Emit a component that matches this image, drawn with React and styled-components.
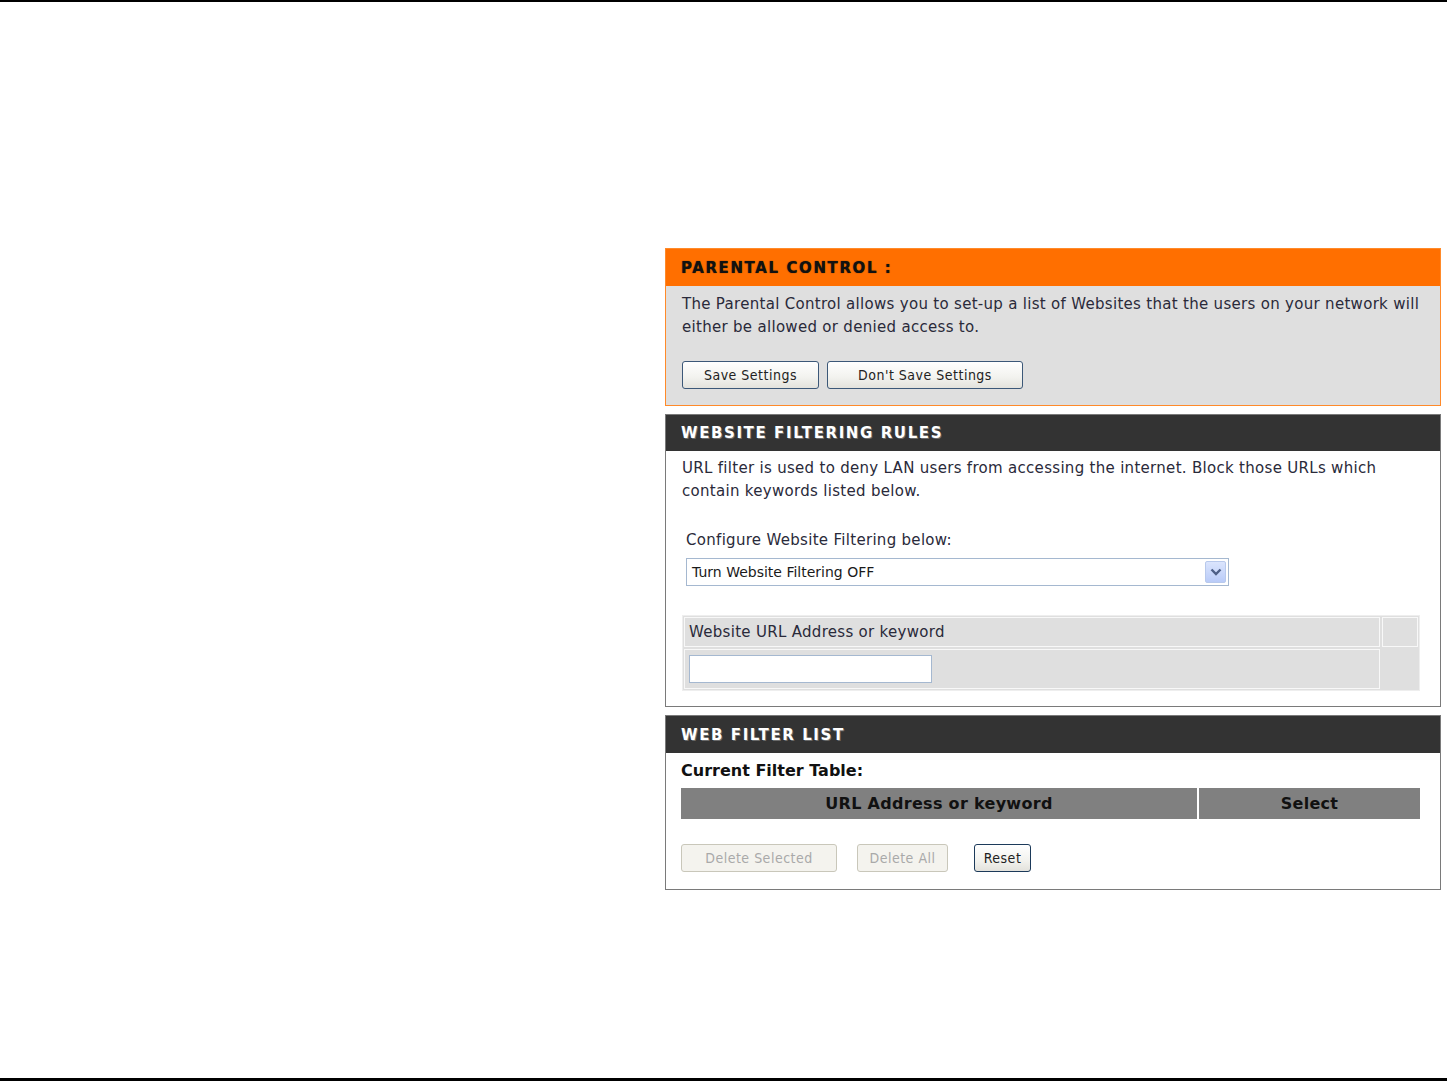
import React from 'react';
import styled, { createGlobalStyle } from 'styled-components';

const GlobalStyle = createGlobalStyle`
    html, body {
        margin: 0;
        padding: 0;
        background: #fff;
    }
    body {
        font-family: "DejaVu Sans", Tahoma, sans-serif;
        color: #222;
    }
`;

const Page = styled.div`
    width: 1447px;
    height: 1081px;
    box-sizing: border-box;
    border-top: 2px solid #000;
    border-bottom: 3px solid #000;
    display: flex;
    flex-direction: column;
    padding: 246px 6px 0 665px;
`;

const Column = styled.div`
    display: flex;
    flex-direction: column;
    gap: 8px;
    width: 776px;
`;

const Panel = styled.div`
    border: 1px solid ${(p) => (p.orange ? '#ff8a2a' : '#7a7a7a')};
    background: ${(p) => (p.orange ? '#dfdfdf' : '#fff')};
`;

const Header = styled.div`
    height: ${(p) => p.h || 36}px;
    background: ${(p) => (p.orange ? '#ff6f00' : '#333333')};
    color: ${(p) => (p.orange ? '#111' : '#fff')};
    display: flex;
    align-items: center;
    padding-left: 15px;
    font-family: "DejaVu Sans", Verdana, sans-serif;
    font-weight: bold;
    font-size: 15px;
    letter-spacing: 1.6px;
    text-shadow: ${(p) => (p.orange ? '0 0 1px #3a2a00' : '1px 1px 0 #6a6a6a')};
`;

const Body = styled.div`
    padding: ${(p) => p.pad || '7px 16px 16px 16px'};
`;

const Text = styled.div`
    font-size: 15px;
    line-height: 23px;
    letter-spacing: 0.3px;
    color: #2a2a3a;
    white-space: nowrap;
`;

const ButtonRow = styled.div`
    display: flex;
    gap: ${(p) => p.gap || 8}px;
    margin-top: ${(p) => p.top || 22}px;
`;

const Button = styled.button`
    height: 28px;
    width: ${(p) => p.w}px;
    margin-left: ${(p) => p.ml || 0}px;
    box-sizing: border-box;
    border-radius: 3px;
    border: 1px solid ${(p) => (p.disabled ? '#c9c7ba' : p.dark ? '#1c3a5a' : '#3c5878')};
    background: ${(p) => (p.disabled ? '#f4f3ee' : 'linear-gradient(#ffffff, #f2f2ee 60%, #e3e2dc)')};
    color: ${(p) => (p.disabled ? '#a9a9a9' : '#222')};
    font-family: "DejaVu Sans Condensed", "DejaVu Sans", Tahoma, sans-serif;
    font-size: 14px;
    letter-spacing: 0.5px;
    padding: 0;
`;

const Label = styled.div`
    font-size: 15px;
    letter-spacing: 0.3px;
    color: #2a2a3a;
    margin: 28px 0 9px 4px;
`;

const SelectBox = styled.div`
    width: 543px;
    height: 28px;
    margin-left: 4px;
    box-sizing: border-box;
    border: 1px solid #a5b8d0;
    background: #fff;
    display: flex;
    align-items: center;
    justify-content: space-between;
    padding: 0 2px 0 5px;
    font-size: 14px;
    color: #1a1a1a;
`;

const ArrowButton = styled.div`
    width: 21px;
    height: 22px;
    box-sizing: border-box;
    border: 1px solid #b8c9ec;
    border-radius: 2px;
    background: linear-gradient(#dbe5fd, #b9cbf8);
    display: flex;
    align-items: center;
    justify-content: center;
`;

const EntryTable = styled.div`
    margin-top: 29px;
    border: 1px solid #eeeeee;
    background: #dfdfdf;
    display: grid;
    grid-template-columns: 1fr 36px;
    grid-template-rows: 30px 40px;
    gap: 2px;
    padding: 1px;
`;

const EntryCell = styled.div`
    border: ${(p) => (p.plain ? 'none' : '1px solid #f8f8f8')};
    background: #dfdfdf;
    display: flex;
    align-items: center;
    padding-left: 4px;
    font-size: 15px;
    letter-spacing: 0.3px;
    color: #2a2a3a;
`;

const TextInput = styled.input`
    width: 243px;
    height: 28px;
    box-sizing: border-box;
    border: 1px solid #a5b8d0;
    background: #fff;
    outline: none;
`;

const SubTitle = styled.div`
    font-weight: bold;
    font-size: 16px;
    color: #111;
    margin-bottom: 8px;
`;

const ListHead = styled.div`
    display: grid;
    grid-template-columns: 516px 1fr;
    gap: 2px;
`;

const HeadCell = styled.div`
    height: 31px;
    background: #808080;
    display: flex;
    align-items: center;
    justify-content: center;
    font-weight: bold;
    font-size: 16px;
    letter-spacing: 0.3px;
    color: #111;
`;

const ChevronDown = () => (
    <svg width="12" height="8" viewBox="0 0 12 8">
        <path d="M1.5 1.5 L6 6 L10.5 1.5" fill="none" stroke="#4d5f86" strokeWidth="2.4" />
    </svg>
);

const App = () => {
    return (
        <Page>
            <GlobalStyle />
            <Column>
                <Panel orange>
                    <Header orange h={37}>PARENTAL CONTROL :</Header>
                    <Body pad="7px 16px 16px 16px">
                        <Text>
                            The Parental Control allows you to set-up a list of Websites that the users on your network will
                        </Text>
                        <Text>either be allowed or denied access to.</Text>
                        <ButtonRow>
                            <Button w={137}>Save Settings</Button>
                            <Button w={196}>Don't Save Settings</Button>
                        </ButtonRow>
                    </Body>
                </Panel>

                <Panel>
                    <Header>WEBSITE FILTERING RULES</Header>
                    <Body pad="6px 20px 15px 16px">
                        <Text>
                            URL filter is used to deny LAN users from accessing the internet. Block those URLs which
                        </Text>
                        <Text>contain keywords listed below.</Text>
                        <Label>Configure Website Filtering below:</Label>
                        <SelectBox>
                            <span>Turn Website Filtering OFF</span>
                            <ArrowButton>
                                <ChevronDown />
                            </ArrowButton>
                        </SelectBox>
                        <EntryTable>
                            <EntryCell>Website URL Address or keyword</EntryCell>
                            <EntryCell />
                            <EntryCell>
                                <TextInput type="text" />
                            </EntryCell>
                            <EntryCell plain />
                        </EntryTable>
                    </Body>
                </Panel>

                <Panel>
                    <Header h={37}>WEB FILTER LIST</Header>
                    <Body pad="8px 20px 17px 15px">
                        <SubTitle>Current Filter Table:</SubTitle>
                        <ListHead>
                            <HeadCell>URL Address or keyword</HeadCell>
                            <HeadCell>Select</HeadCell>
                        </ListHead>
                        <ButtonRow top={25} gap={20}>
                            <Button w={156} disabled>Delete Selected</Button>
                            <Button w={91} disabled>Delete All</Button>
                            <Button w={57} dark ml={6}>Reset</Button>
                        </ButtonRow>
                    </Body>
                </Panel>
            </Column>
        </Page>
    );
};

export default App;
